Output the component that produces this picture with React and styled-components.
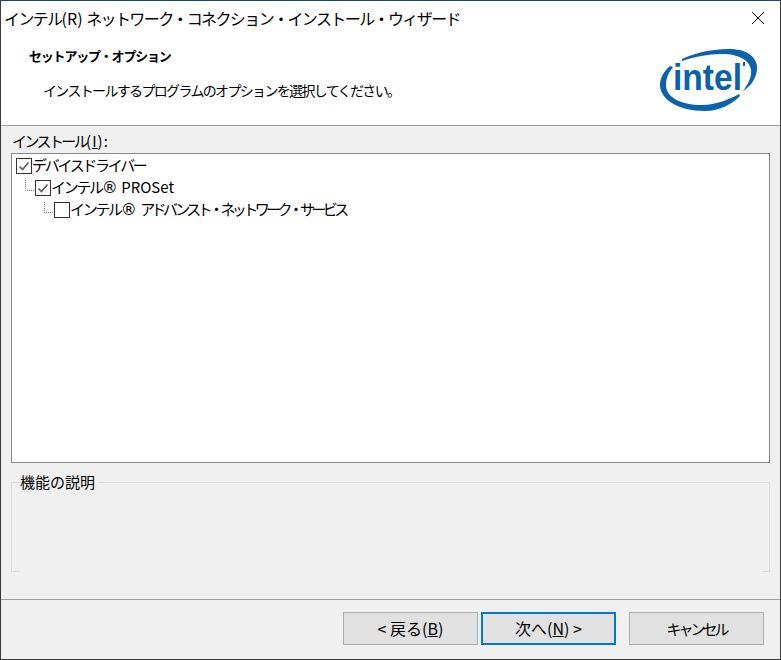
import React from 'react'
import styled, { createGlobalStyle } from 'styled-components'

const FONT = '"Noto Sans CJK JP", "Noto Sans", sans-serif'

const Global = createGlobalStyle`
  html, body { margin: 0; padding: 0; background: #f0f0f0; }
  body { font-family: ${FONT}; color: #000; }
`

const IntelLogo = () => (
  <svg width="97" height="65" viewBox="0 0 97 65">
    <path d="M22 12C40 3 66 0 80 3C92 6 98 14 97 23C96 32 90 40 83 44C88 37 92 30 91 23C90 13 78 7 62 7C48 7 34 10 22 14Z" fill="#0b62ac" />
    <path d="M10 19C3 25 0 32 0 38C0 52 18 64 45 64C60 64 72 57 80 49L79 47C70 52 56 58 42 58C20 58 6 50 6 38C6 31 9 25 13 20Z" fill="#0b62ac" />
    <text x="13" y="43" fontFamily="Liberation Sans, sans-serif" fontWeight="700" fontSize="36" fill="#0b62ac" textLength="69" lengthAdjust="spacingAndGlyphs">intel</text>
    <rect x="83" y="15" width="2" height="4" fill="#0b62ac" />
  </svg>
)

const CheckBox = ({ checked }) => (
  <Box>
    {checked && (
      <svg width="14" height="14" viewBox="0 0 14 14">
        <path d="M2.5 7.5L5.5 10.5L11.5 3.5" fill="none" stroke="#5c5c5c" strokeWidth="1.6" />
      </svg>
    )}
  </Box>
)

const Connector = () => (
  <svg width="16" height="16" viewBox="0 0 16 16">
    <path d="M6.5 0V10.5H16" fill="none" stroke="#808080" strokeDasharray="1 1" />
  </svg>
)

const App = () => (
  <>
    <Global />
    <Window>
      <Header>
        <TitleRow>
          <Title>インテル<Latin>(R) </Latin>ネットワーク・コネクション・インストール・ウィザード</Title>
          <CloseButton>
            <svg width="14" height="14" viewBox="0 0 14 14">
              <path d="M1 1L13 13M13 1L1 13" stroke="#000" strokeWidth="1" fill="none" />
            </svg>
          </CloseButton>
        </TitleRow>
        <HeaderBody>
          <HeaderText>
            <Heading>セットアップ・オプション</Heading>
            <SubHeading>インストールするプログラムのオプションを選択してください。</SubHeading>
          </HeaderText>
          <IntelLogo />
        </HeaderBody>
      </Header>
      <Main>
        <FieldLabel>インストール<Latin $wide>(<u>I</u>):</Latin></FieldLabel>
        <Tree>
          <TreeRow $level={0}>
            <CheckBox checked />
            <RowText>デバイスドライバー</RowText>
          </TreeRow>
          <TreeRow $level={1}>
            <Connector />
            <CheckBox checked />
            <RowText>インテル<RMark>®</RMark><Latin> PROSet</Latin></RowText>
          </TreeRow>
          <TreeRow $level={2}>
            <Connector />
            <CheckBox />
            <RowText>インテル<RMark>®</RMark><Latin> </Latin><TightRun>アドバンスト・ネットワーク・サービス</TightRun></RowText>
          </TreeRow>
        </Tree>
        <GroupBox>
          <GroupLegend>機能の説明</GroupLegend>
          <GroupCorners />
        </GroupBox>
      </Main>
      <Footer>
        <Button>&lt; 戻る(<u>B</u>)</Button>
        <Button $primary>次へ(<u>N</u>) &gt;</Button>
        <Button $gapLeft $kana>キャンセル</Button>
      </Footer>
    </Window>
  </>
)

export default App

const Window = styled.div`
  width: 781px;
  height: 660px;
  box-sizing: border-box;
  border-top: 1px solid #1b4a66;
  border-left: 1px solid #3a3a3a;
  border-right: 1px solid #3a3a3a;
  border-bottom: 1px solid #3a3a3a;
  display: flex;
  flex-direction: column;
  background: #f0f0f0;
  overflow: hidden;
`

const Header = styled.div`
  height: 124px;
  flex: none;
  background: #fff;
  border-bottom: 1px solid #a0a0a0;
  display: flex;
  flex-direction: column;
`

const TitleRow = styled.div`
  height: 36px;
  flex: none;
  display: flex;
  align-items: center;
  justify-content: space-between;
  padding-left: 3px;
`

const Title = styled.div`
  font-size: 16px;
  line-height: 36px;
  letter-spacing: -1.6px;
  margin-top: -2px;
  white-space: pre;
`

const Latin = styled.span`
  letter-spacing: ${(p) => (p.$wide ? '1px' : '0')};
`

const CloseButton = styled.div`
  width: 44px;
  height: 32px;
  display: flex;
  align-items: center;
  justify-content: center;
  margin-top: -2px;
`

const HeaderBody = styled.div`
  flex: 1;
  display: flex;
  justify-content: space-between;
  align-items: flex-start;
  padding: 10px 23px 0 28px;
`

const HeaderText = styled.div`
  display: flex;
  flex-direction: column;
`

const Heading = styled.div`
  font-size: 13px;
  font-weight: 700;
  line-height: 20px;
  letter-spacing: -1.2px;
  margin-top: -1px;
`

const SubHeading = styled.div`
  font-size: 14px;
  line-height: 20px;
  letter-spacing: -1.66px;
  margin: 14px 0 0 14px;
`

const Main = styled.div`
  flex: 1;
  display: flex;
  flex-direction: column;
  padding: 5px 10px 0 10px;
`

const FieldLabel = styled.div`
  font-size: 15px;
  line-height: 20px;
  height: 22px;
  padding-left: 1px;
  letter-spacing: -2.6px;
`

const Tree = styled.div`
  height: 310px;
  flex: none;
  box-sizing: border-box;
  background: #fff;
  border: 1px solid #828790;
  padding: 1px 0 0 4px;
  display: flex;
  flex-direction: column;
`

const TreeRow = styled.div`
  height: 22px;
  display: flex;
  align-items: center;
  font-size: 15px;
  padding-left: ${(p) => (p.$level > 0 ? (p.$level - 1) * 19 + 3 : 0)}px;
  white-space: pre;
`

const RowText = styled.span`
  letter-spacing: -2.3px;
  margin-bottom: 4px;
  margin-left: -1px;
`

const TightRun = styled.span`
  letter-spacing: -3.6px;
`

const RMark = styled.span`
  font-family: "DejaVu Sans", sans-serif;
  font-size: 16px;
  letter-spacing: 0;
`

const Box = styled.span`
  width: 16px;
  height: 16px;
  flex: none;
  box-sizing: border-box;
  border: 1px solid #333;
  background: #fff;
  display: flex;
  align-items: center;
  justify-content: center;
  margin-right: 1px;
`

const GroupBox = styled.div`
  position: relative;
  height: 90px;
  margin-top: 19px;
  box-sizing: border-box;
  border-top: 1px solid #dcdcdc;
  border-left: 1px solid #dcdcdc;
  border-right: 1px solid #dcdcdc;
`

const GroupLegend = styled.span`
  position: absolute;
  left: 8px;
  top: -11px;
  padding: 0 3px 0 0;
  font-size: 15px;
  line-height: 20px;
  background: #f0f0f0;
`

const GroupCorners = styled.div`
  position: absolute;
  left: 0;
  right: 0;
  bottom: 0;
  height: 1px;
  background: linear-gradient(to right, #dcdcdc 8px, transparent 8px, transparent calc(100% - 6px), #dcdcdc calc(100% - 6px));
`

const Footer = styled.div`
  height: 60px;
  flex: none;
  box-sizing: border-box;
  border-top: 1px solid #a0a0a0;
  display: flex;
  justify-content: flex-end;
  align-items: flex-start;
  gap: 3px;
  padding: 12px 16px 0 0;
`

const Button = styled.div`
  width: 135px;
  height: 33px;
  box-sizing: border-box;
  background: #e1e1e1;
  border: ${(p) => (p.$primary ? '2px solid #0078d7' : '1px solid #adadad')};
  margin-left: ${(p) => (p.$gapLeft ? '10px' : '0')};
  display: flex;
  align-items: center;
  justify-content: center;
  font-size: ${(p) => (p.$kana ? '15px' : '16px')};
  letter-spacing: ${(p) => (p.$kana ? '-3px' : '0')};
  padding-bottom: 1px;
  white-space: pre;
`
